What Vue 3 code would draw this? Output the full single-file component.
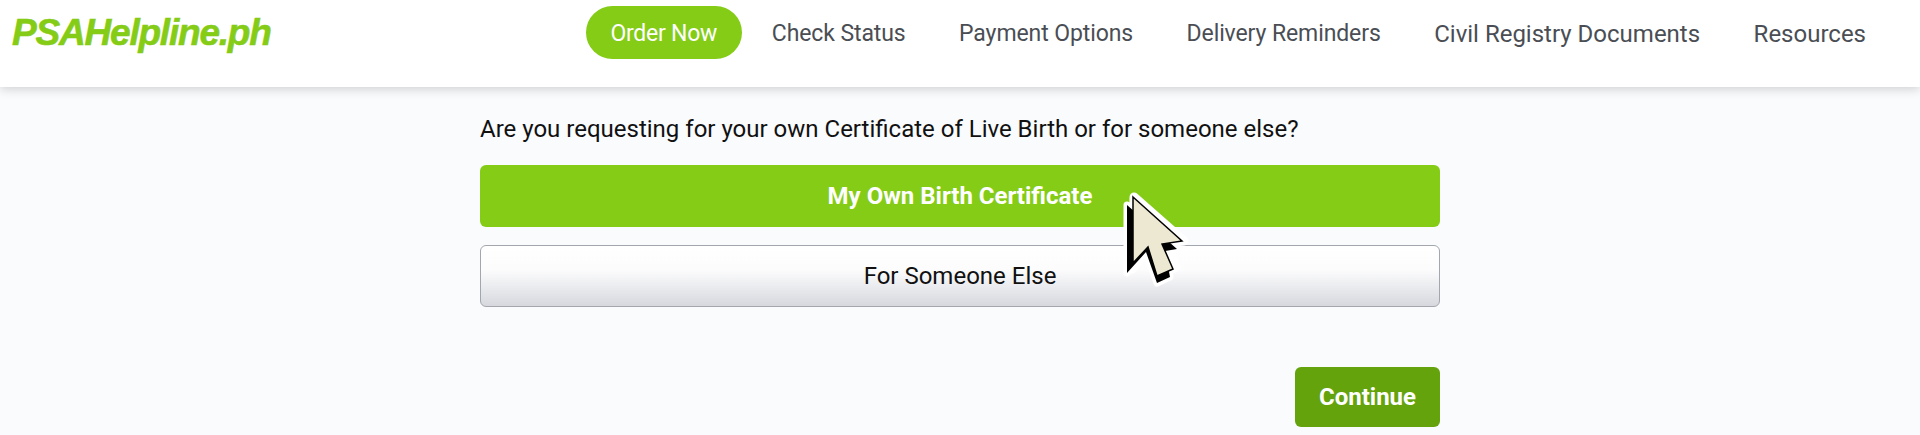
<script setup>
const links = ['Check Status', 'Payment Options', 'Delivery Reminders', 'Civil Registry Documents', 'Resources']
</script>

<template>
  <div class="page">
    <header class="header">
      <a class="logo">PSAHelpline.ph</a>
      <nav class="nav">
        <a class="order">Order Now</a>
        <a v-for="(l, i) in links" :key="l" class="link" :class="{ narrow: i < 3 }">{{ l }}</a>
      </nav>
    </header>
    <main class="main">
      <p class="question">Are you requesting for your own Certificate of Live Birth or for someone else?</p>
      <div class="choice selected">My Own Birth Certificate</div>
      <div class="choice plain">
        For Someone Else
      </div>
      <div class="actions"><button class="continue">Continue</button></div>
      <svg class="cursor" width="90" height="110" viewBox="0 0 90 110">
        <path d="M15 8 L65 52 L47 54 L57 78 L38 88 L28 62 L13 80 Z" fill="#fff" stroke="#fff" stroke-width="9" stroke-linejoin="round" />
        <path d="M8 16 L58 60 L46 62 L51 88 L38 94 L27 63 L8 84 Z" fill="#000" stroke="#fff" stroke-width="7" stroke-linejoin="round" />
        <path d="M8 16 L58 60 L46 62 L51 88 L38 94 L27 63 L8 84 Z" fill="#000" />
        <path d="M14 8 L63 52 L43 55 L54 80 L38 87 L29 58 L14 74 Z" fill="#ece8d2" stroke="#000" stroke-width="1.5" stroke-linejoin="miter" />
      </svg>
    </main>
  </div>
</template>

<style>
html, body { margin: 0; background: #f9fbfd; }
</style>

<style scoped>
.page {
  height: 435px;
  overflow: hidden;
  background: #f9fbfd;
  font-family: Roboto, sans-serif;
}
.header {
  height: 87px;
  box-sizing: border-box;
  background: #fff;
  box-shadow: 0 2px 10px rgba(0, 0, 0, .18);
  display: flex;
  justify-content: space-between;
  align-items: flex-start;
  padding: 6px 54px 0 12px;
}
.logo {
  margin-top: 8px;
  font: italic 700 37px/38px "Liberation Sans", sans-serif;
  letter-spacing: -1.2px;
  color: #84cc16;
  -webkit-text-stroke: .6px #84cc16;
}
.nav {
  display: flex;
  align-items: center;
  height: 53px;
  gap: 53.5px;
}
.order {
  width: 156px;
  height: 53px;
  padding-top: 2px;
  box-sizing: border-box;
  border-radius: 27px;
  background: #84cc16;
  color: #fff;
  font-size: 23px;
  letter-spacing: -.25px;
  display: flex;
  align-items: center;
  justify-content: center;
  margin-right: -23.5px;
}
.link {
  padding-top: 2px;
  font-size: 24px;
  color: #4a4e54;
}
.narrow {
  font-size: 23px;
  letter-spacing: -.1px;
}
.main {
  position: relative;
  width: 960px;
  margin: 0 auto;
}
.question {
  margin: 0;
  padding: 30px 0 29px;
  height: 19px;
  font-size: 24px;
  line-height: 24px;
  color: #111;
}
.choice {
  height: 62px;
  box-sizing: border-box;
  border-radius: 6px;
  display: flex;
  align-items: center;
  justify-content: center;
  font-size: 24px;
}
.selected {
  background: #84cc16;
  color: #fff;
  font-weight: 700;
  margin-bottom: 18px;
}
.plain {
  color: #111;
  border: 1px solid #a3a6ad;
  background: linear-gradient(#fff 0, #fcfcfd 40%, #d6d8de 100%);
}
.actions {
  display: flex;
  justify-content: flex-end;
  margin-top: 60px;
}
.continue {
  width: 145px;
  height: 60px;
  border: 0;
  border-radius: 6px;
  background: #65a30d;
  color: #fff;
  font: 700 24px Roboto, sans-serif;
}
.cursor {
  position: absolute;
  left: 639px;
  top: 102px;
}
</style>
